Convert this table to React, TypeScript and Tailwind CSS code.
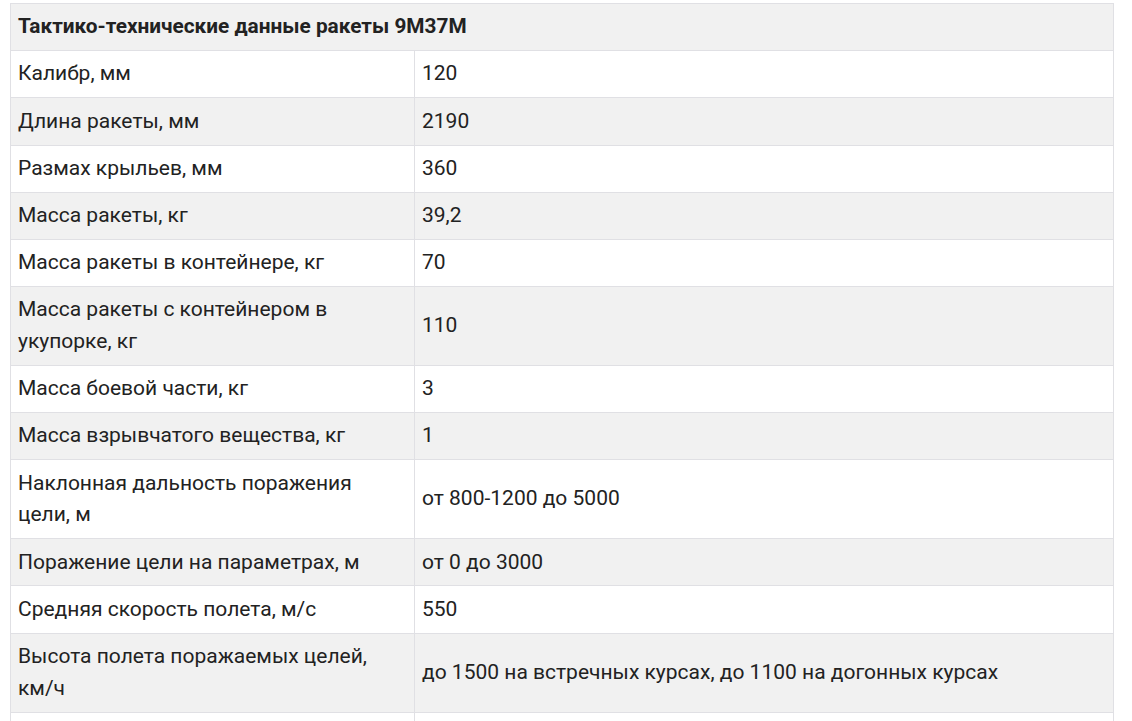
const rows: [string, string][] = [
  ['Калибр, мм', '120'],
  ['Длина ракеты, мм', '2190'],
  ['Размах крыльев, мм', '360'],
  ['Масса ракеты, кг', '39,2'],
  ['Масса ракеты в контейнере, кг', '70'],
  ['Масса ракеты с контейнером в укупорке, кг', '110'],
  ['Масса боевой части, кг', '3'],
  ['Масса взрывчатого вещества, кг', '1'],
  ['Наклонная дальность поражения цели, м', 'от 800-1200 до 5000'],
  ['Поражение цели на параметрах, м', 'от 0 до 3000'],
  ['Средняя скорость полета, м/с', '550'],
  ['Высота полета поражаемых целей, км/ч', 'до 1500 на встречных курсах, до 1100 на догонных курсах'],
  ['\u00a0', '\u00a0'],
];

export default function App() {
  return (
    <div className="bg-white h-screen overflow-hidden pt-[3px] pl-[10px]" style={{ fontFamily: 'Roboto, "Noto Sans", sans-serif' }}>
      <table className="w-[1104px] border-collapse text-[21px] leading-[31.8px] text-[#222222]">
        <thead>
          <tr className="bg-[#f1f1f1]">
            <th colSpan={2} className="border border-[#e0e0e4] px-[7px] py-[7.2px] text-left text-[20.8px] font-bold">
              Тактико-технические данные ракеты 9М37М
            </th>
          </tr>
        </thead>
        <tbody>
          {rows.map(([name, value], i) => (
            <tr key={i} className={i % 2 === 1 ? 'bg-[#f1f1f1]' : 'bg-white'}>
              <td className="w-[404px] border border-[#e0e0e4] px-[7px] py-[7.2px] align-middle">{name}</td>
              <td className="border border-[#e0e0e4] px-[7px] py-[7.2px] align-middle">{value}</td>
            </tr>
          ))}
        </tbody>
      </table>
    </div>
  );
}
